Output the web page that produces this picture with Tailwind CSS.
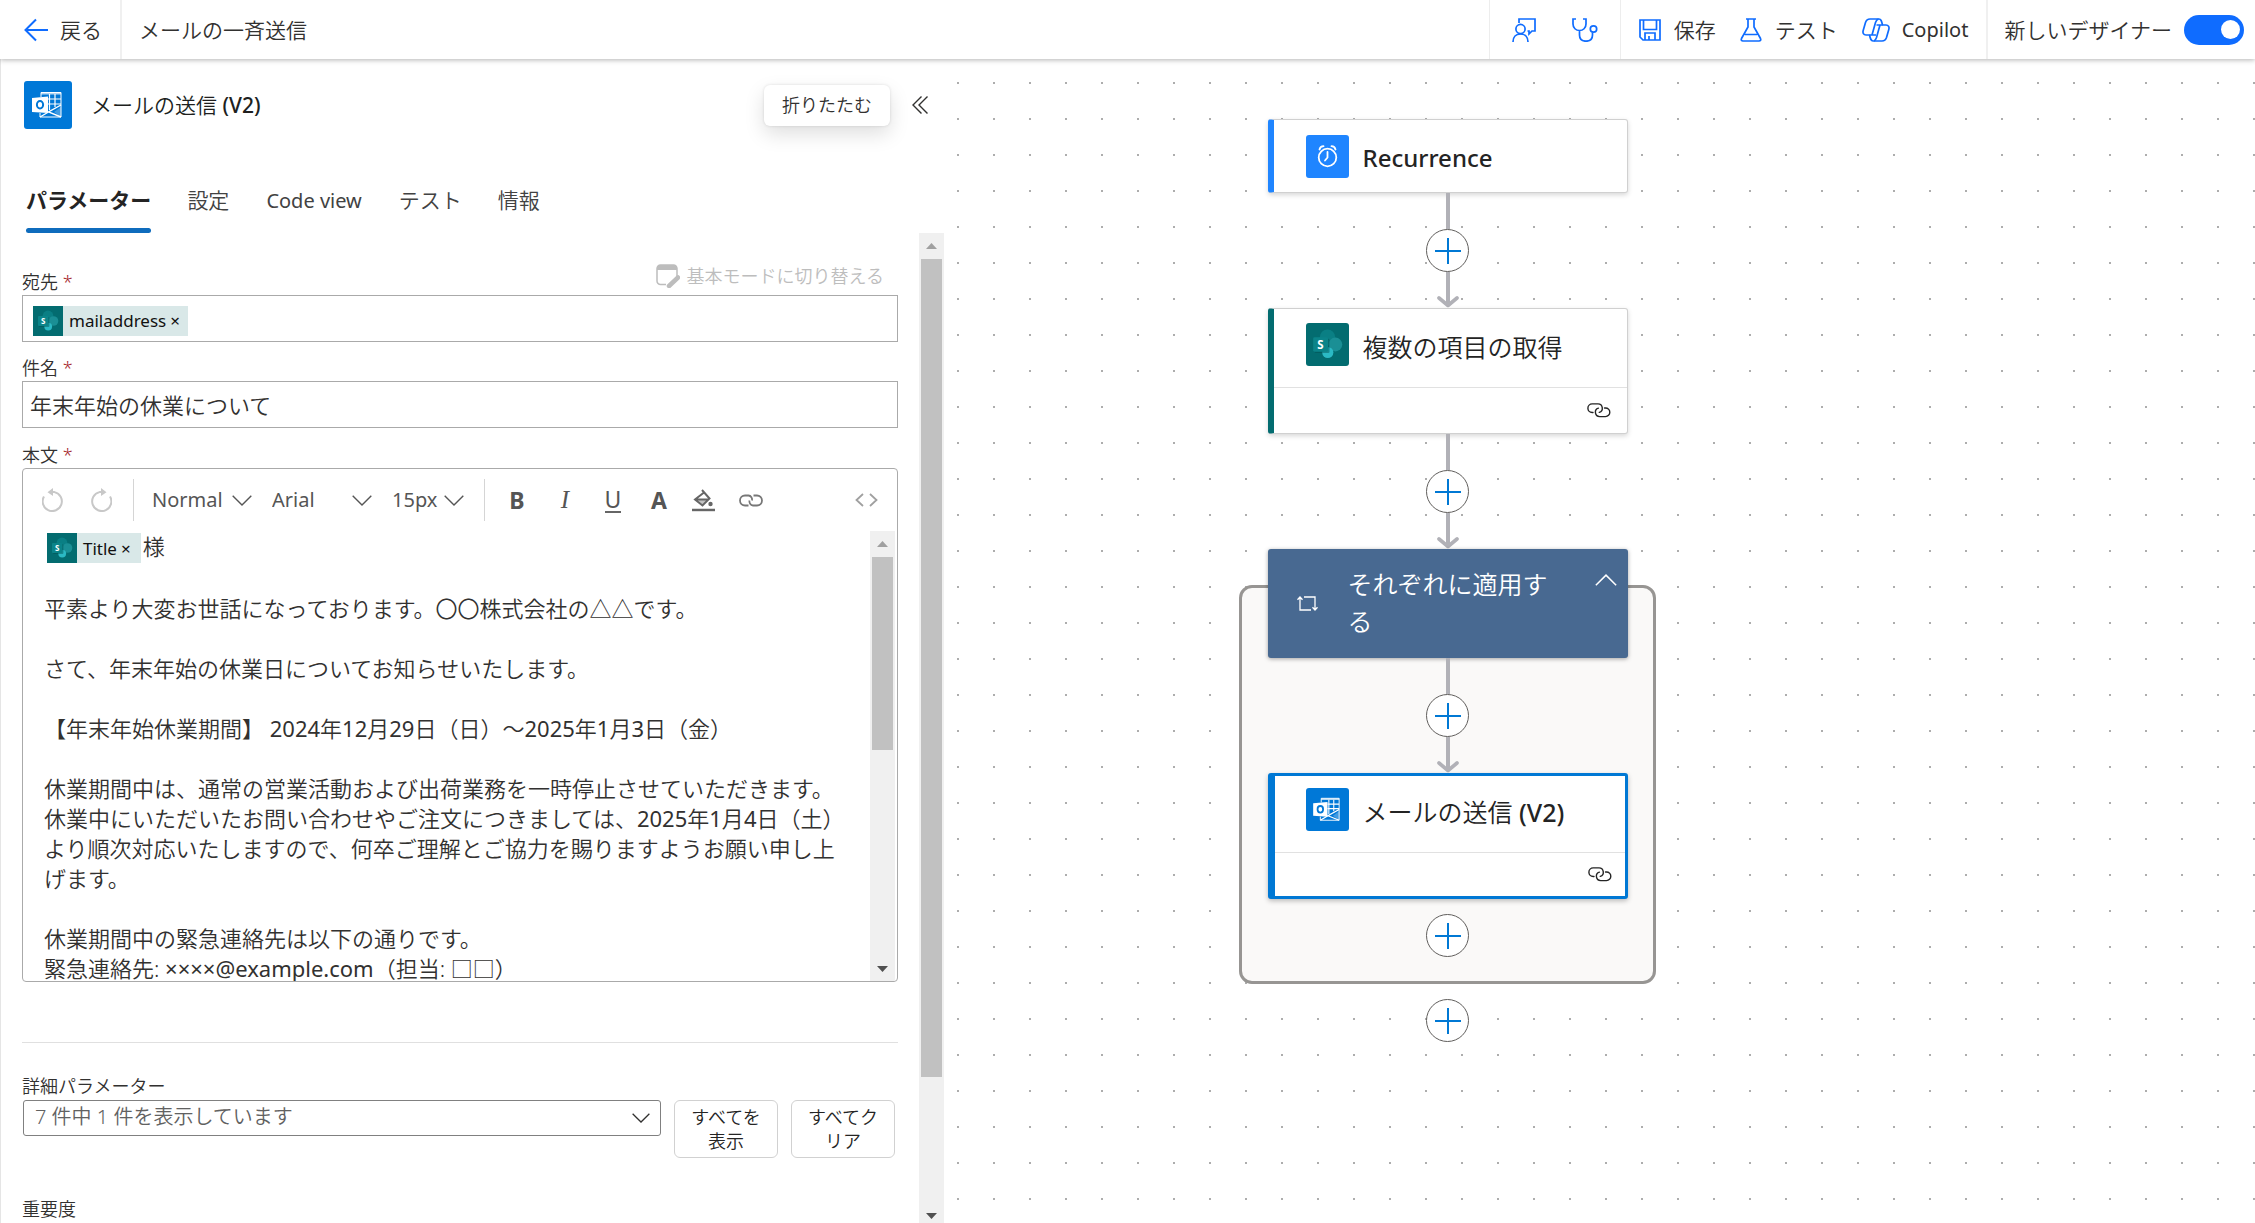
<!DOCTYPE html>
<html lang="ja">
<head>
<meta charset="utf-8">
<title>メールの一斉送信</title>
<script src="https://cdn.jsdelivr.net/npm/@tailwindcss/browser@4"></script>
</head>
<body class="flex h-screen flex-col overflow-hidden bg-white font-['Noto_Sans','Noto_Sans_CJK_JP',sans-serif] text-[21px] font-[350] text-[#323130]">

<!-- shared symbols -->
<svg class="hidden" aria-hidden="true">
  <symbol id="sharepoint" viewBox="0 0 30 30">
    <rect width="30" height="30" fill="#036c70"/>
    <circle cx="15" cy="10" r="5.4" fill="#0a7f84"/>
    <circle cx="20.5" cy="15" r="4.8" fill="#1a8f95"/>
    <circle cx="15.2" cy="20.6" r="3.9" fill="#2bb9c4"/>
    <rect x="6" y="11" width="10.4" height="10" rx="1" fill="#024d50" opacity=".45"/>
    <rect x="5" y="10" width="10.4" height="10" rx="1" fill="#0b8489"/>
    <text x="10.1" y="18" text-anchor="middle" font-size="8" font-weight="700" fill="#fff" font-family="Noto Sans, sans-serif">S</text>
  </symbol>
  <symbol id="outlook" viewBox="0 0 48 48">
    <rect width="48" height="48" fill="#0078d7"/>
    <path d="M17 16V11.500H37V36H16V32" fill="none" stroke="#fff" stroke-width="1"/>
    <path d="M17 11.500H37V13.500H17Z" fill="#fff" opacity=".7"/>
    <path d="M24 18H37M24 23H37M25.500 13V29M31 13V26" stroke="#fff" stroke-width="1.200" fill="none"/>
    <path d="M37 24L24.500 31L37 36M16 36L24.500 31" stroke="#fff" stroke-width="1.400" fill="none"/>
    <path d="M30 31L37 26V36Z" fill="#fff" opacity=".25"/>
    <path d="M8 17L24 15.500V32L8 31Z" fill="#fff"/>
    <ellipse cx="16" cy="23.800" rx="3.100" ry="3.700" fill="none" stroke="#0078d7" stroke-width="2"/>
  </symbol>
  <symbol id="chain" viewBox="0 0 24 16">
    <path d="M6 9.500H5.200A4.300 4.300 0 0 1 5.200 .900H11A4.300 4.300 0 0 1 12.300 9.300M17.500 5H18.500A4.300 4.300 0 0 1 18.500 13.600H12.700A4.300 4.300 0 0 1 11.400 5.200" fill="none" stroke="currentColor" stroke-width="1.400" stroke-linecap="round"/>
  </symbol>
  <symbol id="chevron" viewBox="0 0 20 11">
    <path d="M.700.700L10 10L19.300.700" fill="none" stroke="currentColor" stroke-width="1.400"/>
  </symbol>
  <symbol id="plus" viewBox="0 0 26 26">
    <path d="M0 13H26M13 0V26" fill="none" stroke="#0078d4" stroke-width="2"/>
  </symbol>
  <symbol id="arrow" viewBox="0 0 22 36">
    <path d="M11 0V34" stroke="#b1b1b7" stroke-width="4" fill="none"/>
    <path d="M2 26L11 33.500L20 26" stroke="#b1b1b7" stroke-width="3.600" fill="none" stroke-linecap="round" stroke-linejoin="round"/>
  </symbol>
</svg>

<header class="relative z-10 flex h-[59px] shrink-0 items-stretch bg-white leading-7 shadow-[0_1px_5px_rgba(0,0,0,0.3)]">
  <a href="#" class="flex w-[122px] items-center gap-3 border-r-2 border-[#f0f0f0] pl-6">
    <svg class="h-6 w-6 text-[#0f6cff]" viewBox="0 0 24 24" fill="none" stroke="currentColor" stroke-width="2"><path d="M24 12H1.500M12 1.500L1.500 12L12 22.500"/></svg>
    戻る
  </a>
  <h1 class="flex items-center pl-[17px]">メールの一斉送信</h1>
  <div class="ml-auto flex items-center gap-9 border-l border-[#ededed] px-[22px] text-[#0f6cff]">
    <button aria-label="フィードバック"><svg class="h-6 w-6" viewBox="0 0 24 24" fill="none" stroke="currentColor" stroke-width="1.700"><path d="M7 5V1H23V13H20L17 16V13H15.500"/><circle cx="8.500" cy="11" r="4.600"/><path d="M1 24C1 19 4 16 8.500 16S16 19 16 24"/></svg></button>
    <button aria-label="フロー チェッカー"><svg class="h-6 w-[26px]" viewBox="0 0 26 24" fill="none" stroke="currentColor" stroke-width="1.700"><path d="M4 1H1V6C1 10 4 12.500 7.500 12.500S14 10 14 6V1H11M7.500 12.500V17C7.500 21 10 23.200 14 23.200S20.500 21 20.500 17V14.500"/><circle cx="21.500" cy="11" r="3.200"/></svg></button>
  </div>
  <div class="flex items-center gap-6 border-l border-[#ededed] px-[18px]">
    <button class="flex items-center gap-[13px]"><svg class="h-[22px] w-[22px] text-[#0f6cff]" viewBox="0 0 22 22" fill="none" stroke="currentColor" stroke-width="1.700"><path d="M1 1H21V21H4L1 18Z"/><path d="M4.500 1V10.500H17.500V1M6 21V14H16V21M10 21V17"/></svg>保存</button>
    <button class="flex items-center gap-[13px]"><svg class="h-6 w-[22px] text-[#0f6cff]" viewBox="0 0 22 24" fill="none" stroke="currentColor" stroke-width="1.700"><path d="M6 1H16M8 1V9L1.500 20.500C.800 22 1.500 23 3 23H19C20.500 23 21.200 22 20.500 20.500L14 9V1M5 16.500H17"/></svg>テスト</button>
    <button class="flex items-center gap-3 text-[20px] font-normal"><svg class="h-6 w-7 text-[#0f6cff]" viewBox="0 0 28 24" fill="none" stroke="currentColor" stroke-width="1.700" stroke-linejoin="round"><path d="M7.500 17H4C1.500 17 .500 15 1.200 12.500L3.500 4.500C4.300 2 5.500 1 8 1H17C19 1 19.500 2.500 20.500 7H24C26.500 7 27.500 9 26.800 11.500L24.500 19.500C23.700 22 22.500 23 20 23H11C9 23 8.500 21.500 7.500 17Z"/><path d="M16.500 1C14.500 1.500 14 3 13.500 4.500L10 17H7.500M12 23C13.500 22.500 14 21 14.500 19.500L18 7H20.500M18 7H14.500M10 17H14"/></svg>Copilot</button>
  </div>
  <label class="flex items-center gap-3 border-l-2 border-[#f0f0f0] pr-[11px] pl-4">新しいデザイナー
    <span class="relative flex h-[30px] w-[60px] items-center justify-end rounded-full bg-[#0f6cff] pr-1">
      <input type="checkbox" role="switch" checked class="absolute inset-0 appearance-none">
      <span class="h-[19px] w-[19px] rounded-full bg-white"></span>
    </span>
  </label>
</header>

<main class="flex min-h-0 grow">
  <section class="flex w-[944px] shrink-0 flex-col border-l border-[#e5e5e5] bg-white">
    <div class="flex items-center pt-[22px] pr-4 pl-[23px]">
      <svg class="h-12 w-12 rounded-[3px]"><use href="#outlook"/></svg>
      <h2 class="ml-[19px] leading-7 text-[#201f1e]">メールの送信 <span class="font-medium">(V2)</span></h2>
      <span role="tooltip" class="ml-auto rounded-md bg-white px-[18px] py-[7px] text-[18px] leading-[27px] shadow-[0_0_3px_rgba(0,0,0,0.12),0_8px_20px_rgba(0,0,0,0.13)]">折りたたむ</span>
      <button aria-label="折りたたむ" class="ml-[22px]"><svg class="h-[18px] w-4" viewBox="0 0 16 18" fill="none" stroke="#323130" stroke-width="1.400"><path d="M9.500.500L1 9L9.500 17.500M15.500.500L7 9L15.500 17.500"/></svg></button>
    </div>

    <div role="tablist" class="mt-[57px] flex gap-9 pl-[25px] leading-7 text-[#424242]">
      <button role="tab" aria-selected="true" class="flex flex-col font-bold text-[#242424]">パラメーター<span class="mt-[14px] h-[5px] w-full rounded-full bg-[#0f6cbd]"></span></button>
      <button role="tab" class="self-start">設定</button>
      <button role="tab" class="self-start px-px text-[20px] leading-[30px] font-normal">Code view</button>
      <button role="tab" class="self-start">テスト</button>
      <button role="tab" class="self-start">情報</button>
    </div>

    <div class="flex min-h-0 grow">
      <div class="min-w-0 grow overflow-y-auto pt-[28px] pr-[21px] pl-[21px] text-[18px] leading-[26px] [scrollbar-width:none]">
        <div class="flex items-end justify-between">
          <label id="to-label" class="pt-2">宛先 <span class="text-[#a4262c]">*</span></label>
          <button class="mr-[14px] flex items-center gap-[7px] pb-[6px] text-[#bdbdbd]" disabled>
            <svg class="h-6 w-6" viewBox="0 0 24 24"><path d="M21 12V4.500A3.500 3.500 0 0 0 17.500 1H4.500A3.500 3.500 0 0 0 1 4.500V17A3.500 3.500 0 0 0 4.500 20.500H10" fill="none" stroke="currentColor" stroke-width="1.500"/><path d="M1 6V4.500A3.500 3.500 0 0 1 4.500 1H17.500A3.500 3.500 0 0 1 21 4.500V6Z" fill="currentColor"/><path d="M13 22L22 13.500" stroke="currentColor" stroke-width="4.500" stroke-linecap="round"/></svg>
            基本モードに切り替える
          </button>
        </div>
        <div role="textbox" aria-labelledby="to-label" tabindex="0" class="flex h-[47px] items-center border border-[#aaa] px-[10px] pt-1">
          <span class="flex h-[30px] items-center bg-[#d9e8e8] pr-2 text-[17px] font-normal text-[#111]"><svg class="mr-[6px] h-[30px] w-[30px]"><use href="#sharepoint"/></svg>mailaddress<button aria-label="削除" class="ml-1">×</button></span>
        </div>

        <label for="subject" class="mt-[13px] block">件名 <span class="text-[#a4262c]">*</span></label>
        <input id="subject" type="text" value="年末年始の休業について" class="block h-[47px] w-full border border-[#aaa] px-[7px] pb-[2px] text-[22px] outline-none">

        <label id="body-label" class="mt-[14px] block">本文 <span class="text-[#a4262c]">*</span></label>
        <div class="flex h-[514px] flex-col overflow-hidden rounded-[4px] border border-[#aaa]">
          <div class="flex shrink-0 items-center pt-[10px] pr-[19px] pl-[19px] text-[20px] font-normal text-[#555]">
            <button aria-label="元に戻す" disabled class="mr-[26px] text-[#c8c8c8]"><svg class="h-6 w-[22px]" viewBox="0 0 22 24" fill="none" stroke="currentColor" stroke-width="2"><path d="M2 8.500A9.600 9.600 0 1 0 12.500 4.100H9"/><path d="M11 0V8L5.500 4.300Z" fill="currentColor" stroke="none"/></svg></button>
            <button aria-label="やり直し" disabled class="text-[#c8c8c8]"><svg class="h-6 w-[22px] -scale-x-100" viewBox="0 0 22 24" fill="none" stroke="currentColor" stroke-width="2"><path d="M2 8.500A9.600 9.600 0 1 0 12.500 4.100H9"/><path d="M11 0V8L5.500 4.300Z" fill="currentColor" stroke="none"/></svg></button>
            <span class="mr-[18px] ml-[21px] h-[42px] w-px bg-[#d5d5d5]"></span>
            <span class="relative mr-5 flex items-center"><select aria-label="段落スタイル" class="w-[100px] appearance-none"><option>Normal</option></select><svg class="pointer-events-none absolute right-0 h-[11px] w-5"><use href="#chevron"/></svg></span>
            <span class="relative mr-5 flex items-center"><select aria-label="フォント" class="w-[100px] appearance-none"><option>Arial</option></select><svg class="pointer-events-none absolute right-0 h-[11px] w-5"><use href="#chevron"/></svg></span>
            <span class="relative flex items-center"><select aria-label="サイズ" class="w-[72px] appearance-none"><option>15px</option></select><svg class="pointer-events-none absolute right-0 h-[11px] w-5"><use href="#chevron"/></svg></span>
            <span class="ml-5 h-[42px] w-px bg-[#d5d5d5]"></span>
            <div class="ml-2 flex text-[23px]">
              <button aria-label="太字" class="w-12 font-bold">B</button>
              <button aria-label="斜体" class="w-12 font-['Liberation_Serif',serif] text-[25px] italic">I</button>
              <button aria-label="下線" class="flex w-12 justify-center"><span class="border-b-2 border-[#666] leading-6">U</span></button>
              <button aria-label="文字の色" class="w-11 font-bold">A</button>
            </div>
            <button aria-label="背景色" class="ml-[11px]"><svg class="h-[23px] w-[23px]" viewBox="0 0 23 23"><path d="M0 21H23" stroke="#666" stroke-width="2.400"/><path d="M10 1L17.500 9.500L10.500 16.500L3 10.500L12 3.500M3.500 10.500H16.500" fill="none" stroke="#666" stroke-width="2"/><path d="M4 10.500H16.500L10.500 16Z" fill="#666" opacity=".4"/><circle cx="18.500" cy="15" r="2.200" fill="#666"/></svg></button>
            <button aria-label="リンク" class="ml-6"><svg class="h-[13px] w-6" viewBox="0 0 24 13" fill="none" stroke="#777" stroke-width="1.800"><path d="M9.500 11.500H6A5 5 0 0 1 6 1.500H9.500A4 4 0 0 1 13 6.500M14.500 1.500H18A5 5 0 0 1 18 11.500H14A4 4 0 0 1 10.500 6.500"/></svg></button>
            <button aria-label="コード ビュー" class="ml-auto"><svg class="h-[14px] w-[23px]" viewBox="0 0 23 14" fill="none" stroke="#a0a0a0" stroke-width="1.800"><path d="M8 1L1.500 7L8 13M15 1L21.500 7L15 13"/></svg></button>
          </div>
          <div class="mt-[10px] flex min-h-0 grow pr-[2px]">
            <div role="textbox" aria-multiline="true" aria-labelledby="body-label" tabindex="0" class="grow overflow-hidden pt-[2px] pl-[21px] text-[22px] leading-[30px] whitespace-nowrap">
              <p class="flex h-[30px] items-start leading-[27px]"><span class="mr-[2px] ml-[3px] flex h-[30px] items-center bg-[#d9e8e8] pr-[10px] text-[17px] font-normal text-[#111]"><svg class="mr-[6px] h-[30px] w-[30px]"><use href="#sharepoint"/></svg>Title<button aria-label="削除" class="ml-1">×</button></span>様</p>
              <p class="mt-[30px]">平素より大変お世話になっております。〇〇株式会社の△△です。</p>
              <p class="mt-[30px]">さて、年末年始の休業日についてお知らせいたします。</p>
              <p class="mt-[30px]">【年末年始休業期間】 <span class="font-normal">2024</span>年<span class="font-normal">12</span>月<span class="font-normal">29</span>日（日）～<span class="font-normal">2025</span>年<span class="font-normal">1</span>月<span class="font-normal">3</span>日（金）</p>
              <p class="mt-[30px]">休業期間中は、通常の営業活動および出荷業務を一時停止させていただきます。<br>休業中にいただいたお問い合わせやご注文につきましては、<span class="font-normal">2025</span>年<span class="font-normal">1</span>月<span class="font-normal">4</span>日（土）<br>より順次対応いたしますので、何卒ご理解とご協力を賜りますようお願い申し上<br>げます。</p>
              <p class="mt-[30px]">休業期間中の緊急連絡先は以下の通りです。<br>緊急連絡先: <span class="font-normal">××××@example.com</span>（担当: □□）</p>
            </div>
            <div aria-hidden="true" class="flex w-[25px] shrink-0 flex-col items-center bg-[#f0f0f0]">
              <svg class="my-[10px] h-[6px] w-[11px] shrink-0" viewBox="0 0 11 6"><path d="M0 6L5.500 0L11 6Z" fill="#a0a0a0"/></svg>
              <span class="h-[193px] w-[21px] bg-[#c1c1c1]"></span>
              <svg class="mt-auto mb-[9px] h-[6px] w-[11px] shrink-0" viewBox="0 0 11 6"><path d="M0 0L5.500 6L11 0Z" fill="#505050"/></svg>
            </div>
          </div>
        </div>

        <hr class="mt-[60px] border-[#e0e0e0]">
        <label for="advanced" class="mt-[30px] block">詳細パラメーター</label>
        <div class="mt-[1px] flex items-start gap-[13px] pr-[3px] pl-px">
          <div class="relative flex grow items-center">
            <select id="advanced" class="h-9 w-full appearance-none rounded-[3px] border border-[#808080] bg-white px-[11px] pb-[2px] text-[20px] leading-6 text-[#616161]"><option>7 件中 1 件を表示しています</option></select>
            <svg class="pointer-events-none absolute right-[11px] h-[10px] w-[18px]"><use href="#chevron"/></svg>
          </div>
          <button class="w-[104px] rounded-md border border-[#d1d1d1] py-1 leading-6 text-[#242424]">すべてを<br>表示</button>
          <button class="w-[104px] rounded-md border border-[#d1d1d1] py-1 leading-6 text-[#242424]">すべてク<br>リア</button>
        </div>
        <p class="mt-[38px]">重要度</p>
      </div>
      <div aria-hidden="true" class="flex w-[25px] shrink-0 flex-col items-center bg-[#f0f0f0]">
        <svg class="my-[10px] h-[6px] w-[11px] shrink-0" viewBox="0 0 11 6"><path d="M0 6L5.500 0L11 6Z" fill="#a0a0a0"/></svg>
        <span class="h-[818px] w-[21px] bg-[#c1c1c1]"></span>
        <svg class="mt-auto mb-1 h-[6px] w-[11px] shrink-0" viewBox="0 0 11 6"><path d="M0 0L5.500 6L11 0Z" fill="#505050"/></svg>
      </div>
    </div>
  </section>

  <section class="grow overflow-hidden bg-[radial-gradient(#adadad_1px,transparent_0)] bg-[length:36px_36px] bg-[position:-4px_6px] pt-[60px] pl-[295px] text-[24px] leading-[37px] text-[#242424]">
    <div class="flex w-[417px] flex-col items-center">
      <article class="flex h-[74px] w-[360px] items-center rounded-[3px] border border-l-[6px] border-[#d0d0d0] border-l-[#1f85ff] bg-white pl-8 shadow-[0_2px_5px_rgba(0,0,0,0.16)]">
        <svg class="h-[43px] w-[43px] rounded-[3px]" viewBox="0 0 43 43"><rect width="43" height="43" fill="#1f85ff"/><g fill="none" stroke="#fff" stroke-width="1.800" stroke-linecap="round"><circle cx="21.500" cy="22.500" r="8.800"/><path d="M21.500 17V22.500L19 25.500M13.500 14.500C14 12.500 15.500 11.300 17.500 11.200M29.500 14.500C29 12.500 27.500 11.300 25.500 11.200"/></g></svg>
        <h3 class="ml-[14px] pt-[2px] font-medium">Recurrence</h3>
      </article>
      <span class="h-9 w-1 bg-[#b1b1b7]"></span>
      <button aria-label="アクションの追加" class="flex h-[43px] w-[43px] items-center justify-center rounded-full border border-[#605e5c] bg-white"><svg class="h-[26px] w-[26px]"><use href="#plus"/></svg></button>
      <svg class="h-9 w-[22px]"><use href="#arrow"/></svg>

      <article class="h-[126px] w-[360px] rounded-[3px] border border-l-[6px] border-[#d0d0d0] border-l-[#036c70] bg-white shadow-[0_2px_5px_rgba(0,0,0,0.16)]">
        <div class="flex h-[79px] items-start border-b border-[#e1e1e1] pt-[14px] pl-8">
          <svg class="h-[43px] w-[43px] rounded-[3px]"><use href="#sharepoint"/></svg>
          <h3 class="ml-[14px] pt-[6px] text-[25px]">複数の項目の取得</h3>
        </div>
        <div class="flex h-[45px] items-center justify-end pr-4"><svg class="h-4 w-6"><use href="#chain"/></svg></div>
      </article>
      <span class="h-9 w-1 bg-[#b1b1b7]"></span>
      <button aria-label="アクションの追加" class="flex h-[43px] w-[43px] items-center justify-center rounded-full border border-[#605e5c] bg-white"><svg class="h-[26px] w-[26px]"><use href="#plus"/></svg></button>
      <svg class="h-9 w-[22px]"><use href="#arrow"/></svg>

      <div class="relative flex w-full flex-col items-center pb-[27px]">
        <div class="absolute inset-x-0 top-[36px] bottom-0 rounded-[13px] border-[3px] border-[#979593] bg-[#faf9f8]"></div>
        <article class="relative flex h-[109px] w-[360px] rounded-[3px] bg-[#486991] text-[25px] text-white shadow-[0_1px_4px_rgba(0,0,0,0.35)]">
          <svg class="mt-[47px] ml-[29px] h-[15px] w-[21px] shrink-0" viewBox="0 0 21 15" fill="none" stroke="#fff" stroke-width="1.300"><path d="M3 1V14H14M.500 3.800L3 1L5.500 3.800M7 1H18V14M15.500 11.200L18 14L20.500 11.200"/></svg>
          <h3 class="ml-[30px] w-[201px] pt-[17px]">それぞれに適用する</h3>
          <button aria-label="折りたたむ" class="mt-[25px] mr-[11px] ml-auto h-3 w-[22px] shrink-0"><svg class="h-3 w-[22px] rotate-180"><use href="#chevron"/></svg></button>
        </article>
        <span class="relative h-9 w-1 bg-[#b1b1b7]"></span>
        <button aria-label="アクションの追加" class="relative flex h-[43px] w-[43px] items-center justify-center rounded-full border border-[#605e5c] bg-white"><svg class="h-[26px] w-[26px]"><use href="#plus"/></svg></button>
        <svg class="relative h-9 w-[22px]"><use href="#arrow"/></svg>

        <article class="relative h-[126px] w-[360px] rounded-[3px] border-[3px] border-l-[7px] border-[#0078d4] bg-white shadow-[0_2px_5px_rgba(0,0,0,0.25)]">
          <div class="flex h-[77px] items-start border-b border-[#e1e1e1] pt-3 pl-[31px]">
            <svg class="h-[43px] w-[43px] rounded-[3px]"><use href="#outlook"/></svg>
            <h3 class="ml-[14px] pt-[6px] text-[25px]">メールの送信 <span class="font-medium">(V2)</span></h3>
          </div>
          <div class="flex h-[43px] items-center justify-end pr-[13px]"><svg class="h-4 w-6"><use href="#chain"/></svg></div>
        </article>
        <button aria-label="アクションの追加" class="relative mt-[15px] flex h-[43px] w-[43px] items-center justify-center rounded-full border border-[#605e5c] bg-white"><svg class="h-[26px] w-[26px]"><use href="#plus"/></svg></button>
      </div>
      <button aria-label="アクションの追加" class="mt-[15px] flex h-[43px] w-[43px] items-center justify-center rounded-full border border-[#605e5c] bg-white"><svg class="h-[26px] w-[26px]"><use href="#plus"/></svg></button>
    </div>
  </section>
</main>
</body>
</html>
